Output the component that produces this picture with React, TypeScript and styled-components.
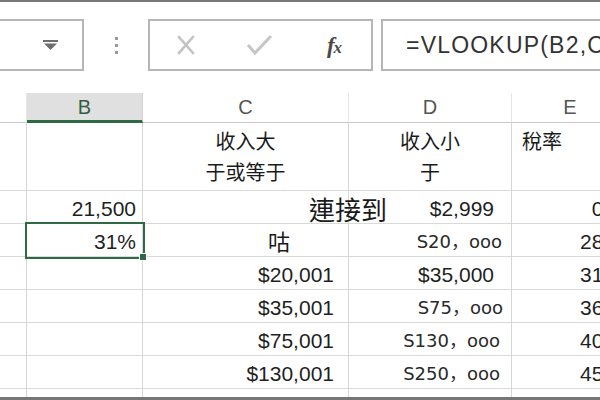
import React from 'react';
import styled, { createGlobalStyle } from 'styled-components';

const GlobalStyle = createGlobalStyle`
  html, body { margin: 0; padding: 0; background: #fff; }
  body { font-family: "Liberation Sans", Arial, sans-serif; }
`;

const Page = styled.div`
  width: 600px;
  height: 400px;
  overflow: hidden;
  display: flex;
  flex-direction: column;
  background: #fff;
`;

const EdgeBar = styled.div<{ $h: number }>`
  flex: none;
  height: ${p => p.$h}px;
  background: #777;
`;

/* ---------- formula toolbar ---------- */

const Toolbar = styled.div`
  flex: none;
  height: 91px;
  box-sizing: border-box;
  padding-top: 17px;
  display: flex;
  align-items: flex-start;
`;

const Box = styled.div`
  flex: none;
  height: 52px;
  box-sizing: border-box;
  border: 2px solid #b6b6b6;
  display: flex;
  align-items: center;
`;

const NameBox = styled(Box)`
  width: 86px;
  margin-left: -2px;
  justify-content: flex-end;
  padding-right: 24px;
`;

const Grip = styled.div`
  flex: none;
  width: 64px;
  height: 52px;
  display: flex;
  flex-direction: column;
  align-items: center;
  justify-content: center;
  gap: 4px;
`;

const GripDot = styled.span`
  width: 3px;
  height: 3px;
  background: #9a9a9a;
`;

const FuncBox = styled(Box)`
  width: 225px;
  padding-left: 27px;
`;

const FuncButton = styled.span<{ $w: number; $gap: number }>`
  flex: none;
  width: ${p => p.$w}px;
  margin-right: ${p => p.$gap}px;
  display: flex;
  align-items: center;
  justify-content: center;
`;

const Fx = styled.span`
  font-family: "Liberation Serif", "Times New Roman", serif;
  font-style: italic;
  font-weight: bold;
  color: #4a4a4a;
  font-size: 23px;
  line-height: 1;
  letter-spacing: -1px;
  & > small {
    font-size: 17px;
  }
`;

const FormulaInput = styled(Box)`
  flex: none;
  width: 260px;
  margin-left: 8px;
  padding-left: 23px;
  font-size: 23px;
  letter-spacing: 1.2px;
  color: #333;
  white-space: nowrap;
  overflow: hidden;
`;

/* ---------- sheet grid ---------- */

const Sheet = styled.div`
  flex: 1;
  min-height: 0;
  overflow: hidden;
  display: grid;
  grid-template-columns: 27px 116px 206px 163px 117px;
  grid-template-rows: 30px 68px repeat(7, 33px);
  width: 629px;
`;

const ColHead = styled.div<{ $active?: boolean }>`
  box-sizing: border-box;
  display: flex;
  align-items: center;
  justify-content: center;
  font-size: 20px;
  color: ${p => (p.$active ? '#2f5f42' : '#555')};
  background: ${p => (p.$active ? '#e0e0e0' : '#fff')};
  border-right: 1px solid ${p => (p.$active ? '#d0d0d0' : '#e6e6e6')};
  border-bottom: ${p => (p.$active ? '3px solid #2e6b45' : '1px solid #c9c9c9')};
  padding-top: ${p => (p.$active ? '2px' : '0')};
`;

type Align = 'left' | 'right' | 'center';
type VAlign = 'top' | 'bottom' | 'middle';

const justify: Record<Align, string> = { left: 'flex-start', right: 'flex-end', center: 'center' };
const items: Record<VAlign, string> = { top: 'flex-start', bottom: 'flex-end', middle: 'center' };

const Cell = styled.div<{ $align: Align; $pad: number; $v: VAlign; $selected?: boolean }>`
  position: relative;
  box-sizing: border-box;
  display: flex;
  justify-content: ${p => justify[p.$align]};
  align-items: ${p => items[p.$v]};
  padding-left: ${p => (p.$align === 'left' ? p.$pad : 0)}px;
  padding-right: ${p => (p.$align === 'right' ? p.$pad : 0)}px;
  padding-bottom: ${p => (p.$v === 'bottom' ? 2 : 0)}px;
  padding-top: ${p => (p.$v === 'top' ? 2 : 0)}px;
  border-right: 1px solid #d6d6d6;
  border-bottom: 1px solid #d9d9d9;
  font-size: 21px;
  line-height: 24px;
  color: #1f1f1f;
  white-space: nowrap;
  background: #fff;
  ${p =>
    p.$selected &&
    `
    z-index: 2;
    outline: 2px solid #2e6b45;
    &::after {
      content: '';
      position: absolute;
      right: -5px;
      bottom: -5px;
      width: 6px;
      height: 6px;
      background: #2e6b45;
      border: 1px solid #fff;
    }
  `}
`;

const CjkLines = styled.div`
  display: flex;
  flex-direction: column;
  align-items: center;
  font-family: "Noto Sans CJK SC", "Noto Sans CJK TC", sans-serif;
  font-size: 20px;
  line-height: 31px;
  color: #1a1a1a;
`;

const CjkText = styled.span<{ $size: number }>`
  font-family: "Noto Sans CJK SC", "Noto Sans CJK TC", sans-serif;
  font-size: ${p => p.$size}px;
  line-height: 31px;
  color: #1a1a1a;
`;

const AltFigure = styled.span`
  font-family: "DejaVu Sans", Verdana, "Noto Sans CJK SC", sans-serif;
  font-size: 18px;
  color: #2a2a2a;
`;

/* floating caption laid over the C/D boundary */
const Caption = styled.span`
  position: absolute;
  left: 166px;
  top: 3px;
  font-family: "Noto Sans CJK TC", "Noto Sans CJK SC", sans-serif;
  font-size: 26px;
  line-height: 30px;
  color: #1a1a1a;
  z-index: 3;
`;

type CellSpec = {
  content?: React.ReactNode;
  align?: Align;
  pad?: number;
  v?: VAlign;
  selected?: boolean;
};

const money = (s: string): CellSpec => ({ content: s, align: 'right', pad: 14 });
const rate = (s: string): CellSpec => ({ content: s, align: 'right', pad: 6 });
const alt = (s: string, pad: number): CellSpec => ({
  content: <AltFigure>{s}</AltFigure>,
  align: 'right',
  pad,
});

const rows: CellSpec[][] = [
  [
    {},
    {},
    { content: <CjkLines><span>收入大</span><span>于或等于</span></CjkLines>, align: 'center', v: 'top' },
    { content: <CjkLines><span>收入小</span><span>于</span></CjkLines>, align: 'center', v: 'top' },
    { content: <CjkText $size={20}>稅率</CjkText>, align: 'left', pad: 10, v: 'top' },
  ],
  [
    {},
    { content: '21,500', align: 'right', pad: 6 },
    { content: <Caption>連接到</Caption> },
    { content: '$2,999', align: 'right', pad: 17 },
    rate('0%'),
  ],
  [
    {},
    { content: '31%', align: 'right', pad: 6, selected: true },
    { content: <CjkText $size={22}>咕</CjkText>, align: 'left', pad: 125, v: 'middle' },
    alt('S20，ooo', 9),
    rate('28%'),
  ],
  [{}, {}, money('$20,001'), { content: '$35,000', align: 'right', pad: 17 }, rate('31%')],
  [{}, {}, money('$35,001'), alt('S75，ooo', 8), rate('36%')],
  [{}, {}, money('$75,001'), alt('S130，ooo', 11), rate('40%')],
  [{}, {}, money('$130,001'), alt('S250，ooo', 11), rate('45%')],
  [{}, {}, {}, {}, {}],
];

const DropArrow = () => (
  <svg width="15" height="11" viewBox="0 0 15 11">
    <rect x="0" y="0" width="15" height="2" fill="#6d6d6d" />
    <polygon points="1,3.5 14,3.5 7.5,10" fill="#6d6d6d" />
  </svg>
);

const CancelIcon = () => (
  <svg width="18" height="20" viewBox="0 0 18 20">
    <path d="M2 2 L16 18 M16 2 L2 18" stroke="#c3c3c3" strokeWidth="2.6" strokeLinecap="square" fill="none" />
  </svg>
);

const EnterIcon = () => (
  <svg width="27" height="22" viewBox="0 0 27 22">
    <path d="M2 11 L9 19 L25 2" stroke="#c6c6c6" strokeWidth="3" fill="none" strokeLinejoin="miter" />
  </svg>
);

export default function App() {
  return (
    <Page>
      <GlobalStyle />
      <EdgeBar $h={2} />
      <Toolbar>
        <NameBox>
          <DropArrow />
        </NameBox>
        <Grip>
          <GripDot />
          <GripDot />
          <GripDot />
        </Grip>
        <FuncBox>
          <FuncButton $w={18} $gap={51}>
            <CancelIcon />
          </FuncButton>
          <FuncButton $w={27} $gap={49}>
            <EnterIcon />
          </FuncButton>
          <FuncButton $w={24} $gap={0}>
            <Fx>
              f<small>x</small>
            </Fx>
          </FuncButton>
        </FuncBox>
        <FormulaInput>=VLOOKUP(B2,C2:E8,3)</FormulaInput>
      </Toolbar>
      <Sheet>
        <ColHead />
        <ColHead $active>B</ColHead>
        <ColHead>C</ColHead>
        <ColHead>D</ColHead>
        <ColHead>E</ColHead>
        {rows.map((row, r) =>
          row.map((c, i) => (
            <Cell
              key={`${r}-${i}`}
              $align={c.align ?? 'left'}
              $pad={c.pad ?? 0}
              $v={c.v ?? 'bottom'}
              $selected={c.selected}
            >
              {c.content}
            </Cell>
          ))
        )}
      </Sheet>
      <EdgeBar $h={3} />
    </Page>
  );
}
